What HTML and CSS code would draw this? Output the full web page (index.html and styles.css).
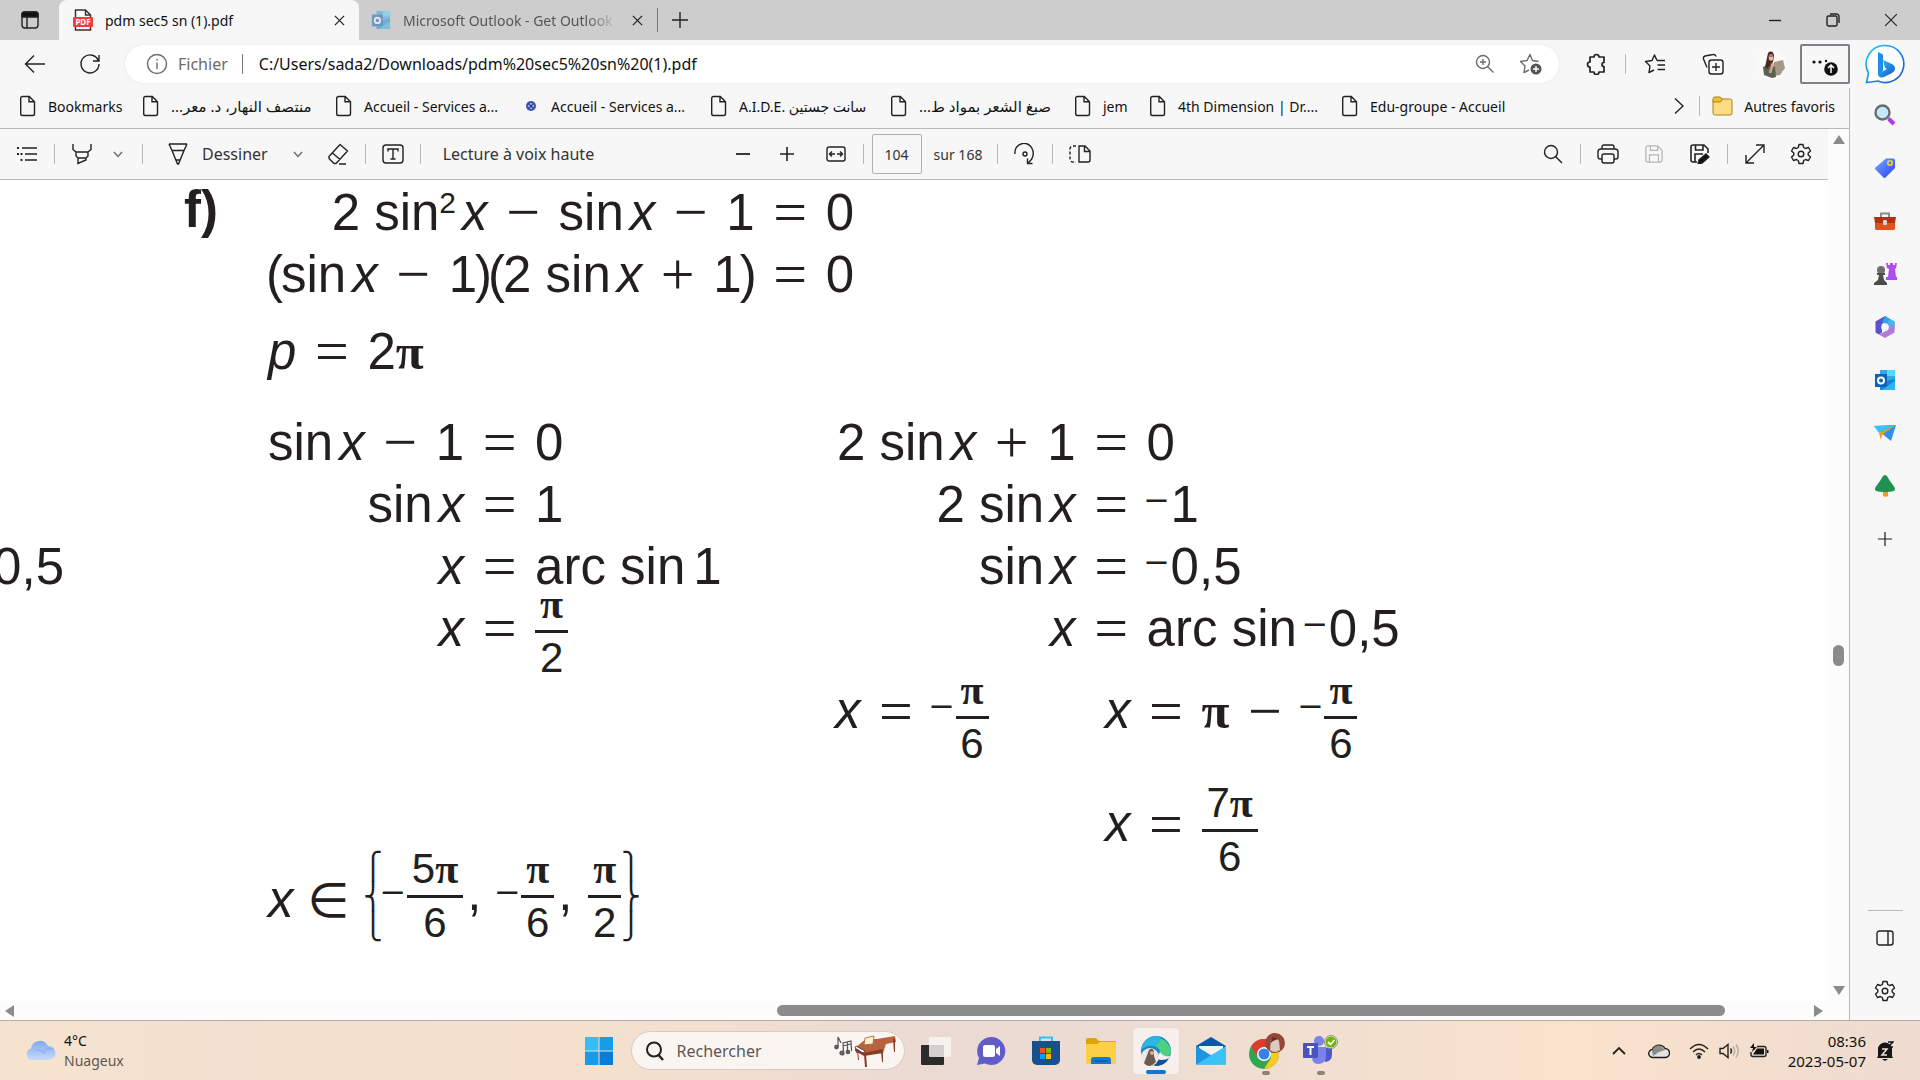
FILE: index.html
```html
<!DOCTYPE html>
<html lang="fr">
<head>
  <meta charset="UTF-8">
  <title>pdm sec5 sn (1).pdf</title>
  <meta name="viewport" content="width=device-width, initial-scale=1.0">
  <link rel="stylesheet" href="styles.css">
</head>
<body>

  <!-- shared icons -->
  <svg class="defs" width="0" height="0">
    <symbol id="page" viewBox="0 0 20 22"><path d="M4.500 1.500h6.800l5.200 5.200v12a1.800 1.800 0 0 1-1.800 1.800H4.500a1.800 1.800 0 0 1-1.800-1.800V3.300a1.800 1.800 0 0 1 1.800-1.800zM11 1.800v5h5.200"/></symbol>
    <symbol id="chev" viewBox="0 0 10 10"><path d="M1 3l4 4.500L9 3"/></symbol>
    <symbol id="cross" viewBox="0 0 12 12"><path d="M1 1l10 10M11 1L1 11"/></symbol>
    <symbol id="plus" viewBox="0 0 18 18"><path d="M9 1v16M1 9h16"/></symbol>
    <symbol id="gear" viewBox="0 0 22 22"><circle cx="11" cy="11" r="2.800"/><path d="M9 1.500h4l.700 3 1.800 1 3-1 2 3.500-2.300 2v2l2.300 2-2 3.500-3-1-1.800 1-.700 3H9l-.700-3-1.800-1-3 1-2-3.500 2.300-2v-2L1.500 8l2-3.500 3 1 1.800-1z" stroke-linejoin="round"/></symbol>
    <symbol id="outlook" viewBox="0 0 22 22"><path fill="#32a9e8" d="M6 1h15v12H6z"/><path fill="#54daff" d="M13 1h8v6h-8z"/><path fill="#1b86d6" d="M6 13l15-3v11H6z"/><path fill="#2eb4f2" d="M21 12v9H8z"/><path fill="#0b64b5" d="M1 5h12v13H1z"/><circle cx="7" cy="11.500" r="3" fill="none" stroke="#fff" stroke-width="2"/></symbol>
  </svg>

  <header class="titlebar">
    <button class="tab-actions" aria-label="Onglets"><svg class="line" width="18" height="18" viewBox="0 0 18 18"><rect x="1" y="1" width="16" height="16" rx="3"/><path d="M1 3a2 2 0 0 1 2-2h12a2 2 0 0 1 2 2v3H1z" fill="#111"/><path d="M6 5v12"/></svg></button>
    <div class="tab active">
      <svg width="20" height="22" viewBox="0 0 20 22"><path d="M2.500 1h10l5 5v15h-15z" fill="#fff" stroke="#333" stroke-width="1.500"/><path d="M12.500 1v5h5" fill="none" stroke="#333" stroke-width="1.500"/><rect y="8" width="20" height="10" rx="1" fill="#f33b3b"/><text x="10" y="15.500" text-anchor="middle" class="pdf-tag">PDF</text></svg>
      <span class="tab-title">pdm sec5 sn (1).pdf</span>
      <button class="tab-close" aria-label="Fermer"><svg class="line" width="11" height="11"><use href="#cross"/></svg></button>
    </div>
    <div class="tab">
      <svg class="faded" width="20" height="20"><use href="#outlook"/></svg>
      <span class="tab-title fade">Microsoft Outlook - Get Outlook</span>
      <button class="tab-close" aria-label="Fermer"><svg class="line" width="11" height="11"><use href="#cross"/></svg></button>
    </div>
    <button class="new-tab" aria-label="Nouvel onglet"><svg class="line" width="18" height="18"><use href="#plus"/></svg></button>
    <div class="window-buttons">
      <button aria-label="Réduire"><svg class="line" width="14" height="14"><path d="M1 7.500h12"/></svg></button>
      <button aria-label="Restaurer"><svg class="line" width="14" height="14" viewBox="0 0 14 14"><rect x="1" y="3" width="10" height="10" rx="1.500"/><path d="M4 1h6.500A2.500 2.500 0 0 1 13 3.500V10"/></svg></button>
      <button aria-label="Fermer"><svg class="line thin" width="14" height="14"><use href="#cross"/></svg></button>
    </div>
  </header>

  <div class="browser">
    <div class="main">

      <nav class="address">
        <button class="nav-btn" aria-label="Retour"><svg class="line" width="22" height="20" viewBox="0 0 22 20"><path d="M21 10H1.500M10 1.500L1.500 10l8.500 8.500"/></svg></button>
        <button class="nav-btn" aria-label="Actualiser"><svg class="line" width="22" height="22" viewBox="0 0 22 22"><path d="M19.500 8A9 9 0 1 0 20 11M20 2v6h-6"/></svg></button>
        <div class="omnibox">
          <svg class="line grey" width="22" height="22" viewBox="0 0 22 22"><circle cx="11" cy="11" r="9.500"/><path d="M11 9.500V16M11 6v1.500"/></svg>
          <span class="scheme">Fichier</span>
          <input class="url" type="text" aria-label="Adresse" value="C:/Users/sada2/Downloads/pdm%20sec5%20sn%20(1).pdf">
          <button class="box-btn" aria-label="Zoom"><svg class="line grey" width="20" height="20" viewBox="0 0 20 20"><circle cx="8" cy="8" r="6.500"/><path d="M12.500 12.500L18.500 18.500M8 5v6M5 8h6"/></svg></button>
          <button class="box-btn" aria-label="Ajouter aux favoris"><svg class="line grey" width="24" height="22" viewBox="0 0 24 22"><path d="M19.500 8.500l-6-1L11 1.500 8 7.500l-6.500 1L6 13l-1 6.500 5-2.500" stroke-linejoin="round"/><circle cx="17" cy="16" r="5.500" fill="#555" stroke="none"/><path d="M17 13v6M14 16h6" stroke="#fff"/></svg></button>
        </div>
        <button class="side-btn" aria-label="Extensions"><svg class="line" width="22" height="22" viewBox="0 0 22 22"><path stroke-width="1.700" stroke-linejoin="round" d="M5 4h4a2.500 2.500 0 0 1 5 0h5v5.500a2 2 0 0 0 0 4V19h-5a2.500 2.500 0 0 1-5 0H5v-5a2.500 2.500 0 0 1 0-5z"/></svg></button>
        <span class="sep"></span>
        <button class="side-btn" aria-label="Favoris"><svg class="line" width="22" height="22" viewBox="0 0 22 22"><path stroke-linejoin="round" d="M13 7.500L10.500 2 8 7.500l-6.500 1L6 13l-1 6.500 5-2.500M13 7.500h8M13.500 12H21M13.500 16.500H21"/></svg></button>
        <button class="side-btn" aria-label="Collections"><svg class="line" width="22" height="22" viewBox="0 0 22 22"><path d="M5 14.500L1.500 6a2.500 2.500 0 0 1 1.500-3L11 1.500a2.500 2.500 0 0 1 3 2"/><rect x="7" y="7" width="14" height="14" rx="2.500"/><path d="M14 10v8M10 14h8"/></svg></button>
        <button class="side-btn" aria-label="Profil"><svg width="30" height="30" viewBox="0 0 30 30"><circle cx="15" cy="15" r="15" fill="#fbfafa"/><path fill="#a29a86" d="M18 13l9-2 2 8-5 7-6 1z"/><path fill="#5c6152" d="M7 18l7-3 5 3 1 10-4 1-8-3z"/><path fill="#4b2a26" d="M12 4c3-3 6-1 6 3l-1 6-6 7-2-2z"/><ellipse cx="15" cy="8.500" rx="2.300" ry="3.300" fill="#e5b9a3"/><path stroke="#dba58c" stroke-width="2.500" d="M14 24l3-10"/><path stroke="#8f2634" d="M13 7h5"/></svg></button>
        <button class="menu-btn" aria-label="Paramètres et plus"><svg width="28" height="24" viewBox="0 0 28 24"><g fill="#111"><circle cx="3" cy="10" r="1.600"/><circle cx="9" cy="10" r="1.600"/><circle cx="15" cy="9" r="1.200"/><circle cx="20" cy="17" r="6.800"/></g><path d="M20 21v-8M17 16l3-3 3 3" fill="none" stroke="#fff" stroke-width="1.500"/></svg></button>
      </nav>

      <div class="below">
        <nav class="bookmarks">
          <div class="marks">
            <a href="#"><svg class="line" width="20" height="22"><use href="#page"/></svg>Bookmarks</a>
            <a href="#"><svg class="line" width="20" height="22"><use href="#page"/></svg><span dir="rtl">منتصف النهار، د. معر...</span></a>
            <a href="#"><svg class="line" width="20" height="22"><use href="#page"/></svg>Accueil - Services a...</a>
            <a href="#"><svg width="20" height="22" viewBox="0 0 20 22"><circle cx="10" cy="11" r="5" fill="#3f55a8"/><path d="M7 11h6M10 8v6" stroke="#c3cdf3" stroke-width="1.500"/><circle cx="10" cy="11" r="1.500" fill="#26398a"/></svg>Accueil - Services a...</a>
            <a href="#"><svg class="line" width="20" height="22"><use href="#page"/></svg>A.I.D.E. سانت جستين</a>
            <a href="#"><svg class="line" width="20" height="22"><use href="#page"/></svg><span dir="rtl">صبغ الشعر بمواد ط...</span></a>
            <a href="#"><svg class="line" width="20" height="22"><use href="#page"/></svg>jem</a>
            <a href="#"><svg class="line" width="20" height="22"><use href="#page"/></svg>4th Dimension | Dr....</a>
            <a href="#"><svg class="line" width="20" height="22"><use href="#page"/></svg>Edu-groupe - Accueil</a>
          </div>
          <button class="more" aria-label="Plus de favoris"><svg class="line" width="10" height="18" viewBox="0 0 10 18"><path d="M1 1.500L9 9l-8 7.500"/></svg></button>
          <span class="sep"></span>
          <a class="others" href="#"><svg width="22" height="20" viewBox="0 0 22 20"><rect x="1" y="3" width="19" height="16" rx="2" fill="#fddd83" stroke="#ab8513"/><path d="M1 6V3a2 2 0 0 1 2-2h5l2.500 2L8.500 6z" fill="#f0bf38" stroke="#ab8513"/></svg>Autres favoris</a>
        </nav>

        <div class="viewer">
          <div class="document">
            <div class="pdf-bar">
              <div class="group">
                <button class="tool" aria-label="Sommaire"><svg class="line" width="22" height="16" viewBox="0 0 22 16"><path d="M6 2h15M9 8h12M9 14h12"/><path d="M1 2h2M1 8h2M4.500 8h2M4.500 14h2" stroke-width="2.200"/></svg></button>
                <span class="sep"></span>
                <button class="tool" aria-label="Surligner"><svg class="line" width="20" height="22" viewBox="0 0 20 22"><path d="M1 1v5.500L4 9h12l3-2.500V1M4 9v4l2 2h8l2-2V9M6 15v5.500L14 17v-2"/></svg></button>
                <button class="arrow near" aria-label="Couleur"><svg class="line grey" width="10" height="10"><use href="#chev"/></svg></button>
                <span class="sep apart"></span>
                <button class="draw"><svg class="line" width="20" height="22" viewBox="0 0 20 22"><path d="M1 1l3 6.500L9.500 21h1L16 7.500 19 1M1 1h18M4 7.500h12M8 17h4" /></svg>Dessiner</button>
                <button class="arrow" aria-label="Options"><svg class="line grey" width="10" height="10"><use href="#chev"/></svg></button>
                <button class="tool" aria-label="Effacer"><svg class="line" width="22" height="22" viewBox="0 0 22 22"><path stroke-linejoin="round" d="M2 13.500L13 1.500 20.500 8 9 20.500H7l-5-5zM5.500 10l7.500 6.500M12 21h7"/></svg></button>
                <span class="sep"></span>
                <button class="tool" aria-label="Ajouter du texte"><svg class="line" width="22" height="20" viewBox="0 0 22 20"><rect x="1" y="1" width="20" height="18" rx="3"/><path d="M6 7.500V5h10v2.500M11 5v10M8.500 15h5"/></svg></button>
                <span class="sep"></span>
                <button class="read">Lecture à voix haute</button>
              </div>
              <div class="group">
                <button class="tool small" aria-label="Zoom arrière"><svg class="line" width="14" height="14"><path d="M0 7h14" stroke-width="1.800"/></svg></button>
                <button class="tool small" aria-label="Zoom avant"><svg class="line" width="14" height="14"><path d="M7 0v14M0 7h14" stroke-width="1.600"/></svg></button>
                <button class="tool" aria-label="Ajuster à la largeur"><svg class="line" width="20" height="16" viewBox="0 0 20 16"><rect x="1" y="1" width="18" height="14" rx="2"/><path d="M4 8h5M11 8h5M6 5.500L3.500 8 6 10.500M14 5.500L16.500 8 14 10.500"/></svg></button>
                <span class="sep"></span>
                <input class="page-no" type="text" aria-label="Page" value="104">
                <span class="total">sur 168</span>
                <span class="sep"></span>
                <button class="tool" aria-label="Pivoter"><svg class="line" width="22" height="22" viewBox="0 0 22 22"><path d="M1 11a9 9 0 0 1 18-3c1 5-1 9-5 12M13.500 15.500L13.500 20.500h5"/><circle cx="11" cy="11" r="2"/></svg></button>
                <span class="sep"></span>
                <button class="tool" aria-label="Mode page"><svg class="line" width="22" height="18" viewBox="0 0 22 18"><path d="M10 1h6l5 5v9a2 2 0 0 1-2 2h-9zM15.500 1v5.500H21"/><path d="M7 1H4a3 3 0 0 0-3 3v10a3 3 0 0 0 3 3h3" stroke-dasharray="3 2"/></svg></button>
              </div>
              <div class="group end">
                <button class="tool" aria-label="Rechercher"><svg class="line" width="20" height="20" viewBox="0 0 20 20"><circle cx="8" cy="8" r="6.500"/><path d="M12.500 12.500L19 19"/></svg></button>
                <span class="sep"></span>
                <button class="tool" aria-label="Imprimer"><svg class="line" width="22" height="20" viewBox="0 0 22 20"><path d="M5 5V3a2 2 0 0 1 2-2h8a2 2 0 0 1 2 2v2M5 15H3a2 2 0 0 1-2-2V8a3 3 0 0 1 3-3h14a3 3 0 0 1 3 3v5a2 2 0 0 1-2 2h-2M5 5h12"/><rect x="5" y="10" width="12" height="9" rx="2"/></svg></button>
                <button class="tool slim" aria-label="Enregistrer" disabled><svg class="line pale" width="18" height="18" viewBox="0 0 20 20"><path d="M3 1h11l5 5v11a2 2 0 0 1-2 2H3a2 2 0 0 1-2-2V3a2 2 0 0 1 2-2zM6 1v5h8V1M5 19v-8h10v8"/></svg></button>
                <button class="tool" aria-label="Enregistrer sous"><svg class="line" width="20" height="20" viewBox="0 0 20 20"><path stroke-width="1.600" d="M7 18H3a2 2 0 0 1-2-2V3a2 2 0 0 1 2-2h11l4 4v4M5.500 1v5H13V1M5 18v-8h8"/><path d="M8 20l1-4 7-6 3 3-7 6z" fill="#111"/></svg></button>
                <span class="sep"></span>
                <button class="tool" aria-label="Plein écran"><svg class="line" width="20" height="20" viewBox="0 0 20 20"><path d="M1.500 18.500l17-17M11 1h8v8M1 11v8h8"/></svg></button>
                <button class="tool slim" aria-label="Paramètres"><svg class="line" width="22" height="22"><use href="#gear"/></svg></button>
              </div>
            </div>

            <!-- visible part of page 104 -->
            <main class="sheet">
              <div class="previous">0,5</div>
              <div class="number">f)</div>
              <div class="work">
                <div class="eqs">
                  <div class="lhs">2 sin<sup>2</sup><i>x</i><b class="op">−</b>sin<i>x</i><b class="op">−</b>1</div><b class="op">=</b><div>0</div>
                  <div class="lhs"><span class="par">(</span>sin<i>x</i><b class="op">−</b>1<span class="par">)</span><span class="par">(</span>2 sin<i>x</i><b class="op">+</b>1<span class="par">)</span></div><b class="op">=</b><div>0</div>
                </div>
                <div class="eqs period">
                  <div class="lhs"><em>p</em></div><b class="op">=</b><div>2<span class="pi">π</span></div>
                </div>
                <div class="cases">
                  <div class="eqs">
                    <div class="lhs">sin<i>x</i><b class="op">−</b>1</div><b class="op">=</b><div>0</div>
                    <div class="lhs">sin<i>x</i></div><b class="op">=</b><div>1</div>
                    <div class="lhs"><i>x</i></div><b class="op">=</b><div>arc sin<span class="thin-gap">1</span></div>
                    <div class="lhs"><i>x</i></div><b class="op">=</b><div class="mix"><span class="frac"><span class="pi">π</span><span>2</span></span></div>
                  </div>
                  <div class="case-right">
                    <div class="eqs inset">
                      <div class="lhs">2 sin<i>x</i><b class="op">+</b>1</div><b class="op">=</b><div>0</div>
                      <div class="lhs">2 sin<i>x</i></div><b class="op">=</b><div><span class="neg">–</span>1</div>
                      <div class="lhs">sin<i>x</i></div><b class="op">=</b><div><span class="neg">–</span>0,5</div>
                      <div class="lhs"><i>x</i></div><b class="op">=</b><div>arc sin<span class="neg thin-gap">–</span>0,5</div>
                    </div>
                    <div class="solutions">
                      <div class="mix"><em>x</em><b class="op">=</b><span class="neg">–</span><span class="frac"><span class="pi">π</span><span>6</span></span></div>
                      <div>
                        <div class="mix"><em>x</em><b class="op">=</b><span class="pi">π</span><b class="op">−</b><span class="neg">–</span><span class="frac"><span class="pi">π</span><span>6</span></span></div>
                        <div class="mix last"><em>x</em><b class="op">=</b><span class="frac"><span>7<span class="pi">π</span></span><span>6</span></span></div>
                      </div>
                    </div>
                  </div>
                </div>
                <div class="mix result">
                  <em>x</em><span class="in">∈</span><span class="brace">⎧<br>⎨<br>⎩</span><span class="neg">–</span><span class="frac"><span>5<span class="pi">π</span></span><span>6</span></span><span class="comma">,</span><span class="neg">–</span><span class="frac"><span class="pi">π</span><span>6</span></span><span class="comma">,</span><span class="frac"><span class="pi">π</span><span>2</span></span><span class="brace">⎫<br>⎬<br>⎭</span>
                </div>
              </div>
            </main>
          </div>

          <div class="scroll-v">
            <span class="up"></span>
            <span class="track"><span class="thumb"></span></span>
            <span class="down"></span>
          </div>
        </div>

        <div class="scroll-h">
          <span class="left"></span>
          <span class="track"><span class="thumb"></span></span>
          <span class="right"></span>
        </div>
      </div>
    </div>

    <aside class="sidebar">
      <button class="bing" aria-label="Bing"><svg width="40" height="40" viewBox="0 0 40 40"><defs><linearGradient id="bg1" x1="0" y1="0" x2="1" y2="1"><stop offset="0" stop-color="#23c8f5"/><stop offset="1" stop-color="#1b4fd0"/></linearGradient></defs><path d="M20 1.500A18.500 18.500 0 1 1 13 37l-11.500 1.500L3.500 29A18.500 18.500 0 0 1 20 1.500z" fill="#fff" stroke="url(#bg1)" stroke-width="1.600"/><path d="M13 8l5 2.500V27l-5 4z" fill="#1d8fe8"/><path d="M18 16l9 4c4 2 4 7 0 9l-8 4c-3 1-6 0-6-3l9-5-2-1z" fill="url(#bg1)"/></svg></button>
      <button aria-label="Rechercher"><svg width="22" height="22" viewBox="0 0 22 22"><circle cx="8.500" cy="8.500" r="7" fill="#c3e8fb" stroke="#6b6b6b" stroke-width="2.400"/><path d="M13.500 13.500l2 2" stroke="#888" stroke-width="3"/><path d="M15 15l5 5" stroke="#b438ec" stroke-width="4"/></svg></button>
      <button aria-label="Achats"><svg width="22" height="22" viewBox="0 0 22 22"><path d="M12 1.500h7a2 2 0 0 1 2 2v7.500L11.500 20.500q-1 1-2 0l-8-8q-1-1 0-2z" fill="url(#tag)"/><defs><linearGradient id="tag" x1="0" x2="1" y1="0" y2="1"><stop offset="0" stop-color="#72a8ff"/><stop offset="1" stop-color="#2f3ff0"/></linearGradient></defs><circle cx="16" cy="6" r="2.200" fill="#4571f0" stroke="#f9d439" stroke-width="1.600"/></svg></button>
      <button aria-label="Outils"><svg width="24" height="20" viewBox="0 0 24 20"><path d="M8 6V2.500h8V6" fill="none" stroke="#8c8c8c" stroke-width="2"/><rect x="2" y="9" width="20" height="10" rx="1.500" fill="#e0531c"/><path d="M1 6h22l-1 6H2z" fill="#b3300c"/><rect x="10" y="9" width="4" height="5" rx="1" fill="#d5d5d5"/></svg></button>
      <button aria-label="Jeux"><svg width="24" height="24" viewBox="0 0 24 24"><path d="M13 1h2v2h2V1h3v2h2V1h2l-1 5-1 1 1 8h1v3H13v-3h2l1-8-2-1z" fill="#b14bf4"/><circle cx="8" cy="8" r="4" fill="#707070"/><path d="M4 11h8v2h-2l1 5 3 3v2H1v-2l4-3 1-5H4z" fill="#4c4c4c"/></svg></button>
      <button aria-label="Microsoft 365"><svg width="22" height="24" viewBox="0 0 22 24"><path d="M11 1L1.500 6.500v11L5 19.500l3-2V9l8-4.500z" fill="#5654c8"/><path d="M11 1l9.500 5.500V15L16 12l-8-5z" fill="#2fa5e6"/><path d="M20.500 7v10.500L11 23l-6-3.500 9-4.500 1-5z" fill="#b279dd"/><path d="M20.500 9v-2.500L16 4l-2 3 1 5z" fill="#45b9ee"/><circle cx="11" cy="12" r="3.800" fill="#f7f7f7"/></svg></button>
      <button aria-label="Outlook"><svg width="22" height="22"><use href="#outlook"/></svg></button>
      <button aria-label="Déposer"><svg width="24" height="18" viewBox="0 0 24 18"><path d="M1 2L23 1l-5 16-11-9z" fill="#2f8ff0"/><path d="M1 2L23 1 6 9z" fill="#35c4f5"/><path d="M6 9L23 1 9 11l-1 5z" fill="#e89c1b"/></svg></button>
      <button aria-label="Arbre"><svg width="22" height="24" viewBox="0 0 22 24"><path d="M9 17h5v5q-2 1.500-5 0z" fill="#ef9b21"/><path d="M11 1c2 0 3 3 5 6s5 6 5 8-2 3-10 3S1 17 1 15s3-5 5-8 3-6 5-6z" fill="#1f9150"/></svg></button>
      <button aria-label="Ajouter"><svg class="line" width="16" height="16" viewBox="0 0 18 18"><use href="#plus"/></svg></button>
      <span class="rule"></span>
      <button aria-label="Masquer la barre"><svg class="line" width="18" height="16" viewBox="0 0 18 16"><rect x="1" y="1" width="16" height="14" rx="2.500"/><path d="M12 1v14"/></svg></button>
      <button aria-label="Paramètres"><svg class="line" width="22" height="22"><use href="#gear"/></svg></button>
    </aside>
  </div>

  <footer class="taskbar">
    <button class="weather">
      <svg width="32" height="22" viewBox="0 0 32 22"><defs><linearGradient id="cl" x1="0" y1="0" x2="0" y2="1"><stop offset="0" stop-color="#84a9f0"/><stop offset="1" stop-color="#c6daf9"/></linearGradient></defs><path d="M7 20a6 6 0 0 1 0-11.500 9 9 0 0 1 17-2.500A7 7 0 0 1 25 20z" fill="url(#cl)"/><path d="M12 10q5-1 8 3 2-6 9-4" fill="none" stroke="#8fb1ef" stroke-width="1.500"/></svg>
      <span class="weather-text"><span>4°C</span><span class="muted">Nuageux</span></span>
    </button>

    <div class="apps">
      <button aria-label="Démarrer"><svg width="30" height="30" viewBox="0 0 30 30"><path fill="#37bdf4" d="M1 1h13.500v13.500H1z"/><path fill="#169ce8" d="M15.500 1H29v13.500H15.500zM1 15.500h13.500V29H1z"/><path fill="#087cd6" d="M15.500 15.500H29V29H15.500z"/></svg></button>
      <label class="search">
        <svg class="line" width="20" height="20" viewBox="0 0 20 20"><circle cx="9" cy="8.500" r="7" stroke-width="2"/><path d="M13.500 14L18 19" stroke-width="2.500"/></svg>
        <input type="search" placeholder="Rechercher" aria-label="Rechercher">
        <svg width="64" height="34" viewBox="0 0 64 34"><g fill="#666" stroke="#555" stroke-width="1.200"><circle cx="3.500" cy="13" r="1.700"/><path d="M5 13V3l3 6" fill="none"/><circle cx="9" cy="19" r="2"/><circle cx="15" cy="18" r="1.700"/><path d="M10.500 19l-.500-10 8-2 .500 10M10 12l8-2M14.500 18V8" fill="none"/></g><path fill="#b9623f" d="M23 13l10-8h11l18-3 1 6-10 2-3 9-27 0z"/><path fill="#863b26" d="M22 14l8 5 20-4v4l-19 3-9-5zM31 20h2l1 13h-2zM48 17h2v11h-1zM24 17h1l1 9h-1zM60 5h2v13h-1z"/><path fill="#fff" stroke="#333" stroke-width=".8" d="M23 12l9 5-2 2-8-5z"/><path fill="#fbedd2" stroke="#986232" stroke-width=".8" d="M32 4l9-2-1 8-9 1z"/></svg>
      </label>
      <button aria-label="Vue des tâches"><svg width="30" height="30" viewBox="0 0 30 30"><rect y="9" width="23" height="20" rx="1" fill="#2b2b29"/><rect x="8" y="1" width="22" height="20" rx="1" fill="#f8f6f5" opacity=".82"/></svg></button>
      <button aria-label="Conversation"><svg width="30" height="30" viewBox="0 0 30 30"><path d="M15 1a14 14 0 1 1-6 26.500L1 29l2-7A14 14 0 0 1 15 1z" fill="#605dcb"/><rect x="7" y="9" width="12" height="12" rx="2" fill="#fff"/><path d="M20 13l4-3v10l-4-3z" fill="#fff"/></svg></button>
      <button aria-label="Microsoft Store"><svg width="30" height="30" viewBox="0 0 30 30"><path d="M9 6V1.500h12V6" fill="none" stroke="#32c3f2" stroke-width="2"/><path d="M1 5h28v19a5 5 0 0 1-5 5H6a5 5 0 0 1-5-5z" fill="#17518b"/><path fill="#f25022" d="M9 12h5v5H9z"/><path fill="#7fba00" d="M15 12h5v5h-5z"/><path fill="#00a4ef" d="M9 18h5v5H9z"/><path fill="#ffb900" d="M15 18h5v5h-5z"/></svg></button>
      <button aria-label="Explorateur"><svg width="30" height="30" viewBox="0 0 30 30"><path d="M0 4q0-2 2-2h8l3 3h17v10H0z" fill="#dca30d"/><path d="M0 8h11l3-2h16v22H0z" fill="#fbcf47"/><path d="M5 28v-4q0-3 3-3h14q3 0 3 3v4z" fill="#1578c9"/><path d="M9 25h12" stroke="#0b4c91"/></svg></button>
      <button class="current" aria-label="Edge"><svg width="30" height="30" viewBox="0 0 30 30"><circle cx="15" cy="15" r="15" fill="#1887cb"/><path d="M1 12A15 15 0 0 1 30 15q0 5-5 6h-5q-3-1-1-4 0-7-10-8-5 0-8 3z" fill="#4fcf80"/><path d="M1 11A15 15 0 0 1 20 1q-1 9-8 9-6-1-11 3z" fill="#2cb6df"/><path d="M19 16q3 5 10 4-1 3-2 4H15z" fill="#f7efec"/><path d="M13 20q3 4 8 4 4 0 7-2-5 8-13 8-5-3-2-10z" fill="#0c539d"/><circle cx="9" cy="21" r="9" fill="#eee8e4"/><path d="M3 27l2-5 3-8q3-3 5 1v5l2 6q-3 3-6 4-4 0-6-3z" fill="#6b5b52"/><circle cx="11" cy="17" r="2" fill="#dfac95"/></svg></button>
      <button aria-label="Courrier"><svg width="30" height="30" viewBox="0 0 30 30"><path d="M0 10l15-9 15 9v5H0z" fill="#0b58a3"/><path d="M3 10h24v10H3z" fill="#f1f1f2"/><path d="M0 10l30 18.500H0z" fill="#1b95df"/><path d="M30 10L0 28.500h30z" fill="#3cc1f4"/></svg></button>
      <button class="open" aria-label="Chrome"><svg width="38" height="38" viewBox="0 0 38 38"><circle cx="17" cy="22" r="15" fill="#31a650"/><path d="M4 14.500A15 15 0 0 1 30 14.500H17L11 25z" fill="#e13b2d"/><path d="M30 14.500A15 15 0 0 1 17 37l7-11 0-11.500z" fill="#fbc924"/><circle cx="17" cy="22" r="7" fill="#fff"/><circle cx="17" cy="22" r="5.500" fill="#397fec"/><circle cx="28" cy="11" r="10" fill="#944738"/><path d="M23 18l1-10q4-5 8 1l1 9q-5 4-10 0z" fill="#dcc9c1"/><path d="M24 11q0-9 7-4l-5 2z" fill="#652c24"/></svg></button>
      <button class="open" aria-label="Teams"><svg width="36" height="32" viewBox="0 0 36 32"><circle cx="16" cy="6" r="5" fill="#7b83eb"/><path d="M20 13h9v7q0 6-7 7z" fill="#5059c9"/><path d="M9 12h14v9q0 8-8 8-6 0-6-7z" fill="#7b83eb"/><rect y="8" width="15" height="15" rx="1" fill="#4b53bc"/><path d="M4 12h7M7.500 12v8" stroke="#fff" stroke-width="2"/><circle cx="28" cy="7" r="6.500" fill="#f6f1ec" stroke="#8e8a86"/><circle cx="28" cy="7" r="5.500" fill="#6bb700"/><path d="M25 7l2.500 2.500L31.500 5" fill="none" stroke="#fff" stroke-width="1.800"/></svg></button>
    </div>

    <div class="tray">
      <button aria-label="Icônes cachées"><svg class="line" width="14" height="10" viewBox="0 0 14 10"><path d="M1 8l6-6 6 6" stroke-width="1.800"/></svg></button>
      <button aria-label="OneDrive"><svg width="22" height="16" viewBox="0 0 22 16"><path d="M5 14.500A4 4 0 0 1 4.500 6.500 7 7 0 0 1 17 5.500a4.500 4.500 0 0 1 0 9z" fill="#e5e3e1" stroke="#1c1c1c" stroke-width="1.400"/><path d="M4 8q3-7 9-5l4 4-6 2-6 4z" fill="#8e8c8a"/></svg></button>
      <button class="net" aria-label="Réseau et son"><svg class="line" width="20" height="16" viewBox="0 0 20 16"><path d="M1 6q9-9 18 0M4 9q6-6 12 0M7 12q3-3 6 0"/><circle cx="10" cy="14" r="1.200" fill="#111"/></svg>
        <svg class="line" width="20" height="16" viewBox="0 0 20 16"><path d="M1 5.500h3L9 1.500v13l-5-4H1zM11.500 5.500q2 2.500 0 5"/><path d="M14 3.500q3.500 4.500 0 9M17 1.500q4.500 6.500 0 13" stroke="#b9aaa2"/></svg>
        <svg class="line" width="20" height="16" viewBox="0 0 20 16"><path d="M8 3.500h7a2 2 0 0 1 2 2v6a2 2 0 0 1-2 2H4a2 2 0 0 1-2-2V9"/><path d="M8 5.500h7v6H4zM18 7h1.500v3H18zM5 0L1 5h3L3 9l5-5H5z" fill="#111" stroke="none"/></svg></button>
      <button class="clock"><span>08:36</span><span>2023-05-07</span></button>
      <button aria-label="Notifications"><svg width="18" height="20" viewBox="0 0 18 20"><path d="M2 15V8a7 6.500 0 0 1 14 0v7l1 2H1zM6 18h6l-3 2z" fill="#161616"/><path d="M6 8h5l-5 6h5" fill="none" stroke="#eee2da" stroke-width="1.500"/><path d="M12 1h5l-5 5h5" fill="none" stroke="#161616" stroke-width="1.500"/></svg></button>
    </div>
  </footer>

</body>
</html>
```
FILE: styles.css
```css
* {
  box-sizing: border-box;
}

body {
  margin: 0;
  height: 100vh;
  display: flex;
  flex-direction: column;
  overflow: hidden;
  background: #f7f7f7;
  color: #111;
  font-family: "Noto Sans", "Open Sans", "DejaVu Sans", sans-serif;
  font-size: 14px;
}

button {
  display: flex;
  align-items: center;
  justify-content: center;
  padding: 0;
  border: none;
  background: none;
  color: inherit;
  font: inherit;
}

input {
  border: none;
  background: none;
  color: inherit;
  font: inherit;
}

a {
  color: inherit;
  text-decoration: none;
}

svg {
  flex: none;
}

.defs {
  position: absolute;
}

.line {
  fill: none;
  stroke: #222;
  stroke-width: 1.4;
}

.line.thin {
  stroke-width: 1;
}

.line.grey {
  stroke: #6b6b6b;
}

.line.pale {
  stroke: #b5b5b5;
}

.sep {
  width: 1px;
  height: 20px;
  background: #b9b9b9;
}

/* title bar */

.titlebar {
  display: flex;
  height: 40px;
  background: #cdcdcd;
}

.tab-actions {
  width: 59px;
}

.tab {
  display: flex;
  align-items: center;
  gap: 12px;
  width: 298px;
  padding: 0 12px;
  color: #555;
}

.tab.active {
  width: 300px;
  padding-left: 14px;
  background: #f7f7f7;
  border-radius: 8px 8px 0 0;
  color: #111;
}

.tab-title {
  flex: 1;
  overflow: hidden;
  white-space: nowrap;
}

.fade {
  -webkit-mask-image: linear-gradient(90deg, #000 85%, transparent);
  mask-image: linear-gradient(90deg, #000 85%, transparent);
}

.faded {
  opacity: 0.5;
}

.pdf-tag {
  fill: white;
  font-size: 8px;
  font-weight: bold;
}

.tab-close {
  width: 15px;
}

.new-tab {
  width: 44px;
  height: 24px;
  margin-top: 8px;
  border-left: 1px solid #777;
}

.window-buttons {
  display: flex;
  margin-left: auto;
}

.window-buttons button {
  width: 58px;
}

/* browser frame */

.browser {
  flex: 1;
  display: flex;
  min-height: 0;
}

.main {
  flex: 1;
  min-width: 0;
  display: flex;
  flex-direction: column;
}

.address {
  display: flex;
  align-items: center;
  height: 48px;
  padding-left: 7px;
}

.nav-btn {
  width: 55px;
}

.omnibox {
  flex: 1;
  display: flex;
  align-items: center;
  height: 38px;
  margin: 0 8px;
  padding: 0 5px 0 21px;
  border-radius: 19px;
  background: white;
  box-shadow: 0 0 3px #e2e2e2;
  font-size: 16px;
}

.scheme {
  margin-left: 10px;
  padding-right: 14px;
  border-right: 1px solid #777;
  line-height: 20px;
  color: #6b6b6b;
}

.url {
  flex: 1;
  padding: 0 0 0 16px;
}

.box-btn {
  width: 46px;
}

.side-btn {
  width: 58px;
}

.menu-btn {
  width: 50px;
  height: 40px;
  border: 2px solid #7b8088;
  border-radius: 2px;
}

.below {
  flex: 1;
  display: flex;
  flex-direction: column;
  min-height: 0;
  border-right: 1px solid #b9b9b9;
}

.bookmarks {
  display: flex;
  align-items: center;
  height: 41px;
  padding: 0 14px 4px 18px;
  border-bottom: 1px solid #b9b9b9;
}

.marks {
  flex: 1;
  display: grid;
  grid-template-columns: 123px 193px 187px 188px 180px 184px 75px 192px auto;
}

.bookmarks a {
  display: flex;
  align-items: center;
  gap: 10px;
  white-space: nowrap;
}

.bookmarks [dir="rtl"] {
  font-size: 15px;
}

.more {
  width: 40px;
}

.others {
  margin-left: 12px;
}

/* pdf viewer */

.viewer {
  flex: 1;
  display: flex;
  min-height: 0;
}

.document {
  flex: 1;
  min-width: 0;
  display: flex;
  flex-direction: column;
  background: white;
}

.pdf-bar {
  display: grid;
  grid-template-columns: 1fr auto 1fr;
  height: 51px;
  border-bottom: 1px solid #b9b9b9;
  background: #f7f7f7;
  font-size: 16px;
  color: #333;
}

.group {
  display: flex;
  align-items: center;
}

.group.end {
  justify-content: flex-end;
  padding-right: 8px;
}

.tool {
  width: 54px;
  height: 40px;
}

.tool.small {
  width: 44px;
}

.tool.slim {
  width: 38px;
}

.arrow {
  width: 26px;
}

.arrow.near {
  width: 18px;
}

.apart {
  margin-left: 15px;
}

.draw {
  gap: 14px;
  padding: 0 17px 0 25px;
}

.read {
  padding-left: 22px;
}

.page-no {
  width: 50px;
  height: 40px;
  margin-left: 8px;
  border: 1px solid #b0b0b0;
  border-radius: 2px;
  text-align: center;
  font-size: 14px;
}

.total {
  padding: 0 15px 0 12px;
  font-size: 14px;
}

/* page content */

.sheet {
  flex: 1;
  display: grid;
  grid-template-columns: 64px 120px 84px 1fr;
  min-height: 0;
  padding-top: 2px;
  overflow: hidden;
  color: #231f20;
  font-family: "Liberation Sans", Arial, sans-serif;
  font-size: 51px;
  line-height: 62px;
  white-space: nowrap;
}

.previous {
  display: flex;
  justify-content: flex-end;
  margin-top: 354px;
}

.number {
  grid-column: 3;
  font-weight: bold;
  line-height: 56px;
}

.eqs {
  display: grid;
  grid-template-columns: auto 71px auto;
  grid-auto-rows: 62px;
  justify-content: start;
}

.lhs {
  text-align: right;
}

.sheet i {
  margin-left: 6px;
}

.sheet sup {
  font-size: 30px;
  line-height: 0;
  vertical-align: 17px;
}

.op {
  display: inline-block;
  width: 71px;
  text-align: center;
  font-family: "Liberation Serif", serif;
  font-size: 60px;
  font-weight: normal;
  line-height: 60px;
  vertical-align: top;
}

.par {
  margin: 0 -2px;
}

.pi {
  font-family: "Liberation Serif", serif;
  font-weight: bold;
}

.neg {
  display: inline-block;
  width: 24px;
  font-size: 36px;
  line-height: 0;
  vertical-align: 12px;
}

.thin-gap {
  margin-left: 8px;
}

.period {
  margin-top: 15px;
}

.cases {
  display: grid;
  grid-template-columns: 565px auto;
  justify-content: start;
  margin-top: 29px;
}

.inset {
  padding-left: 4px;
}

.mix {
  display: flex;
  align-items: center;
  height: 62px;
}

.mix .neg {
  padding-bottom: 14px;
}

.solutions {
  display: grid;
  grid-template-columns: 270px auto;
  margin-top: 20px;
  padding-left: 2px;
}

.last {
  margin-top: 51px;
}

.frac {
  display: flex;
  flex-direction: column;
  min-width: 33px;
  padding-top: 12px;
  text-align: center;
  font-size: 42px;
  line-height: 42px;
}

.frac > :first-child {
  padding: 0 5px 5px;
  border-bottom: 3px solid #231f20;
}

.frac > :last-child {
  padding-top: 4px;
}

.eqs .frac {
  padding-top: 3px;
}

.result {
  margin-top: 14px;
}

.result .frac,
.result .brace {
  padding: 0 0 8px;
}

.result .neg {
  padding-bottom: 20px;
}

.in {
  margin: 0 14px;
  font-family: "DejaVu Sans", sans-serif;
  font-size: 48px;
}

.comma {
  width: 34px;
  padding: 0 0 14px 4px;
}

.brace {
  font-family: "DejaVu Sans", sans-serif;
  font-size: 26px;
  line-height: 30px;
}

/* scroll bars */

.scroll-v {
  display: flex;
  flex-direction: column;
  align-items: center;
  width: 21px;
  padding: 6px 0;
  background: #fcfcfc;
}

.scroll-h {
  display: flex;
  align-items: center;
  height: 19px;
  padding: 0 26px 0 5px;
  background: #fcfcfc;
}

.track {
  flex: 1;
  display: flex;
}

.track::before,
.track::after {
  content: "";
}

.thumb {
  border-radius: 6px;
  background: #8b8b8b;
}

.scroll-v .track {
  flex-direction: column;
}

.scroll-v .track::before {
  flex: 61;
}

.scroll-v .track::after {
  flex: 39;
}

.scroll-v .thumb {
  width: 11px;
  height: 21px;
}

.scroll-h .track::before {
  flex: 763;
}

.scroll-h .track::after {
  flex: 89;
}

.scroll-h .thumb {
  flex: 948;
  height: 11px;
}

.up, .down {
  border: 6px solid transparent;
  border-top-width: 0;
  border-bottom: 9px solid #8b8b8b;
}

.down {
  transform: rotate(180deg);
}

.left, .right {
  border: 6px solid transparent;
  border-left-width: 0;
  border-right: 9px solid #8b8b8b;
}

.right {
  transform: rotate(180deg);
}

/* edge sidebar */

.sidebar {
  display: flex;
  flex-direction: column;
  align-items: center;
  width: 70px;
  padding-bottom: 3px;
}

.sidebar button {
  width: 70px;
  height: 53px;
}

.sidebar .bing {
  height: 48px;
}

.rule {
  width: 35px;
  height: 1px;
  margin-top: auto;
  background: #b9b9b9;
}

/* taskbar */

.taskbar {
  display: grid;
  grid-template-columns: 1fr auto 1fr;
  align-items: center;
  height: 60px;
  border-top: 1px solid #b5aca5;
  background: linear-gradient(90deg, #f6e3cf, #f4e0d0 12%, #f5e1ce 30%, #ebdad3 50%, #efded1 65%, #fae3cc 82%, #eedbd1);
}

.weather {
  justify-self: start;
  gap: 8px;
  padding-left: 24px;
}

.weather-text {
  display: flex;
  flex-direction: column;
  line-height: 20px;
  text-align: left;
}

.muted {
  color: #5f5650;
}

.apps {
  display: flex;
  align-items: center;
}

.apps button {
  position: relative;
  width: 55px;
  height: 48px;
}

.search {
  display: flex;
  align-items: center;
  width: 274px;
  height: 39px;
  margin: 0 4px;
  padding: 0 7px 0 13px;
  border: 1px solid #d8cbc4;
  border-radius: 20px;
  background: #fbf5f2;
}

.search input {
  flex: 1;
  min-width: 0;
  padding: 0 0 0 12px;
  font-size: 16px;
}

.search input::placeholder {
  color: #5c5855;
}

.apps .current {
  width: 48px;
  margin: 0 4px 0 3px;
  border: 1px solid #e6dad5;
  border-radius: 5px;
  background: #f7efec;
}

.current::after, .open::after {
  content: "";
  position: absolute;
  bottom: 0;
  width: 8px;
  height: 4px;
  border-radius: 2px;
  background: #8b827c;
}

.current::after {
  width: 20px;
  background: #0b78d7;
}

.tray {
  display: flex;
  align-items: center;
  justify-self: end;
  padding-right: 16px;
}

.tray button {
  width: 40px;
}

.tray .net {
  width: auto;
  gap: 10px;
  margin-left: 10px;
}

.tray .clock {
  flex-direction: column;
  align-items: flex-end;
  width: 97px;
  font-size: 15px;
  line-height: 20px;
}

.tray .clock + button {
  width: 38px;
}
```
